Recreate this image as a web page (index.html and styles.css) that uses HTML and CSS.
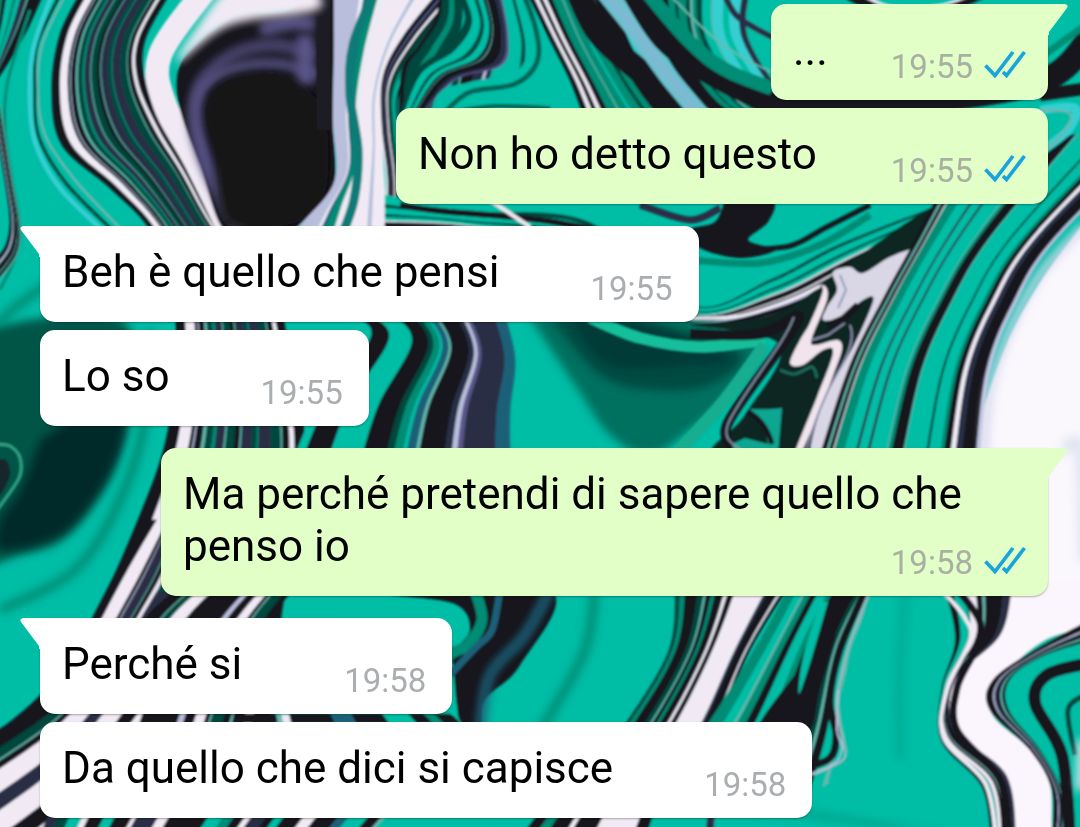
FILE: index.html
```html
<!DOCTYPE html>
<html lang="it">
<head>
<meta charset="utf-8">
<meta name="viewport" content="width=device-width, initial-scale=1">
<title>Chat</title>
<link rel="stylesheet" href="styles.css">
</head>
<body>
<svg class="wallpaper" viewBox="0 0 1080 827" preserveAspectRatio="xMidYMid slice" aria-hidden="true"></svg>
<svg class="defs" aria-hidden="true">
  <symbol id="ticks" viewBox="0 0 42 28">
    <path d="M1.500 15.500 11 25.500 29 2M19 22l3.500 3.500L40.500 2" fill="none" stroke="#17a5dc" stroke-width="3.700"/>
  </symbol>
  <symbol id="tail" viewBox="0 0 22 31">
    <path d="M0 0H18Q22 1 20 4L2 28V31H0Z"/>
  </symbol>
</svg>
<main class="chat">
  <section class="group">
    <article class="bubble sent">
      <svg class="tail"><use href="#tail"/></svg>
      <p class="text">...</p>
      <div class="meta"><time>19:55</time><svg class="ticks" role="img" aria-label="Letto"><use href="#ticks"/></svg></div>
    </article>
    <article class="bubble sent">
      <p class="text">Non ho detto questo&nbsp;</p>
      <div class="meta"><time>19:55</time><svg class="ticks" role="img" aria-label="Letto"><use href="#ticks"/></svg></div>
    </article>
  </section>
  <section class="group">
    <article class="bubble received">
      <svg class="tail"><use href="#tail"/></svg>
      <p class="text">Beh è quello che pensi</p>
      <div class="meta"><time>19:55</time></div>
    </article>
    <article class="bubble received">
      <p class="text">Lo so</p>
      <div class="meta"><time>19:55</time></div>
    </article>
  </section>
  <section class="group">
    <article class="bubble sent long">
      <svg class="tail"><use href="#tail"/></svg>
      <p class="text">Ma perché pretendi di sapere quello che penso io</p>
      <div class="meta"><time>19:58</time><svg class="ticks" role="img" aria-label="Letto"><use href="#ticks"/></svg></div>
    </article>
  </section>
  <section class="group">
    <article class="bubble received">
      <svg class="tail"><use href="#tail"/></svg>
      <p class="text">Perché si&nbsp;</p>
      <div class="meta"><time>19:58</time></div>
    </article>
    <article class="bubble received">
      <p class="text">Da quello che dici si capisce</p>
      <div class="meta"><time>19:58</time></div>
    </article>
  </section>
</main>
<script>
// Marbled wallpaper: each band is a set of stripes blended between two guide curves.
const paper = document.querySelector('.wallpaper');
const ns = 'http://www.w3.org/2000/svg';
const ink = {
  k: '#15141b', w: '#f1eaf5', t: '#00bda6', g: '#008c74', d: '#00463c',
  n: '#292d45', l: '#b9bedc', c: '#35cfd2', p: '#5a5588', s: '#68b8ae', b: '#1a6078'
};

paper.innerHTML = `<defs>
  <filter id="soft" filterUnits="userSpaceOnUse" x="-50" y="-50" width="1180" height="927"><feGaussianBlur stdDeviation="0.9"/></filter>
  <filter id="haze" filterUnits="userSpaceOnUse" x="-50" y="-50" width="1180" height="927"><feGaussianBlur stdDeviation="4"/></filter>
</defs><rect width="1080" height="827" fill="#00bda6"/>`;

const layer = document.createElementNS(ns, 'g');
layer.setAttribute('filter', 'url(#soft)');
paper.append(layer);

function curve(pts) {
  let d = '';
  for (let i = 0; i < pts.length - 1; i++) {
    const a = pts[i - 1] || pts[i], b = pts[i], c = pts[i + 1], e = pts[i + 2] || c;
    d += `C${b[0] + (c[0] - a[0]) / 6} ${b[1] + (c[1] - a[1]) / 6} ` +
         `${c[0] - (e[0] - b[0]) / 6} ${c[1] - (e[1] - b[1]) / 6} ${c[0]} ${c[1]}`;
  }
  return d;
}

const pairs = text => text.trim().split(/\s+/).map(p => p.split(',').map(Number));

function add(d, fill, stroke, width, hazy) {
  const p = document.createElementNS(ns, 'path');
  p.setAttribute('d', d);
  p.setAttribute('fill', fill);
  p.setAttribute('stroke-linejoin', 'round');
  if (stroke) {
    p.setAttribute('stroke', stroke);
    p.setAttribute('stroke-width', width);
  }
  if (hazy) p.setAttribute('filter', 'url(#haze)');
  layer.append(p);
}

function band(from, to, stripes) {
  const A = pairs(from), B = pairs(to);
  const mix = t => A.map((a, i) => [a[0] + (B[i][0] - a[0]) * t, a[1] + (B[i][1] - a[1]) * t]);
  const list = [...stripes.matchAll(/([a-z])([\d]+)/g)].map(m => [m[1], +m[2]]);
  const total = list.reduce((s, x) => s + x[1], 0);
  let at = 0;
  for (const [name, size] of list) {
    const p = mix(at / total), q = mix((at + size) / total).reverse();
    add(`M${p[0]}${curve(p)}L${q[0]}${curve(q)}Z`, ink[name], ink[name], 0.5);
    at += size;
  }
}

function line(points, color, width, hazy) {
  const p = pairs(points);
  add(`M${p[0]}${curve(p)}`, 'none', ink[color] || color, width, hazy);
}

function blob(points, color, hazy) {
  const p = pairs(points);
  add(`M${p[0]}${curve(p)}Z`, ink[color] || color, null, 0, hazy);
}

// Left edge
band('-10,-10 -10,20 -10,45 -10,75', '45,-10 28,28 10,60 -10,90', 't10 g6 k5 t8 g5 t5 n8 s2 k16');
line('65,-5 42,45 38,90 45,135 75,180 120,228', 's', 3);
line('60,-5 37,45 35,90 38,135 65,182 110,228', 'd', 3);
line('52,-5 33,50 30,100 36,145 60,188 100,228', 'c', 5);
line('30,10 8,80 5,130 12,180 20,240 0,290', 'g', 3);
band('-5,120 5,180 10,220 6,245 -5,260', '0,105 12,180 20,225 17,255 -5,285', 'k4 l2 k5 s1 k3 s1');
line('-5,325 25,300 60,280 100,290', 'g', 9, true);
blob('-30,335 30,320 100,315 133,335 132,400 125,440 104,490 65,538 20,555 -30,560 -30,450 -30,335', '#005447', true);
blob('40,440 100,400 126,380 122,440 100,490 60,535 0,550 0,520 20,490 40,440', '#062b29', true);
line('-5,444 10,446 20,458 19,478 -3,510', '#2fa184', 3);
blob('-5,460 6,460 10,475 0,495 -8,490 -5,460', '#15252b');
line('150,330 145,420 120,500 75,570 0,610', 'g', 9, true);

// Long striped ribbon running down the left side
band('82,-10 60,35 52,90 62,145 110,188 150,230 172,290 176,360 166,440 140,515 97,610 45,690 -20,745',
     '172,-10 145,40 145,80 165,125 190,170 222,230 275,295 292,370 305,440 300,520 282,610 270,720 250,850',
     'k7 w7 k2 l1 k4 s2 d4 g2 n5 s1 d5 k3 s1 n6 d3 g1 n7 d6 s1 k4 w3 k6');
line('205,-10 160,55 165,105 195,160 232,235', 'w', 24);
band('150,592 100,650 35,827', '290,592 250,660 190,850', 'n12 k8 s1 d4 w8 k18 l3 k5 w5 k2 s1 d6 k3');
band('150,520 115,575 75,650 35,705 -20,740', '185,520 165,575 125,650 110,730 30,850', 'k8 w12 k3 l1 n8 s1 k4 w3');
band('-20,750 35,715 60,700', '-20,870 70,800 140,710', 'k5 d6 s1 k4 w12 n9 w13 k10');

// Dark drop
blob('205,36 240,15 290,10 318,-20 338,-20 334,60 333,120 334,185 310,215 280,235 228,235 200,165 179,105 180,65 205,36', 'k');
line('240,230 215,180 195,125 200,85 232,55 275,45 315,55', '#47436c', 13, true);
line('230,215 206,165 197,120 203,88 235,68 280,64 320,75', 'p', 9, true);
line('260,30 290,23 315,24', 'p', 14, true);
line('305,35 305,85', 'p', 16, true);
blob('215,150 205,110 225,82 275,75 310,95 325,135 318,205 270,225 225,220 215,150', '#131618', true);
line('324,-10 323,65 324,130', '#1c1b24', 14);
blob('310,-20 235,-15 195,30 178,62 230,25 316,10 316,-10', 'w', true);

// Pale columns beside the drop
band('334,-10 334,60 333,120 335,180 305,220 285,240', '435,-10 400,40 383,90 382,140 385,190 386,240', 'l18 w3 b3 g7 w4 w20 l3 w10');
line('375,-10 353,45 350,95 358,150 354,200 340,240', '#087b78', 9);
band('435,-10 400,35 381,75 380,125 386,180 384,240', '480,-10 430,45 400,90 399,130 405,180 405,240', 'w4 k5 p2 k4 w3 k3 d4 g4 t4 k3');

// Folds at the top centre
band('440,-10 436,18 418,46 402,70 399,120', '530,-10 545,40 550,65 548,100 548,120', 'k3 d7 g5 d8 t10 d4 s1 k7 n6 l2 n3 t18 d3 t18');
band('455,-10 465,20 445,48 415,72 400,115', '500,-10 508,35 502,65 455,80 420,118', 'd8 t9 d4 t6 k3 s1 k9 n5 p2');
blob('550,120 548,70 530,55 515,72 470,82 440,92 428,120', 't');
line('522,-10 536,30 537,62 515,84 470,92 445,112', '#046355', 5);
line('450,112 495,106 550,108', '#046355', 4);
band('525,-10 550,40 570,80 585,120', '785,-10 780,40 830,110 890,130', 'k4 w3 k3 w3 k4 g7 s1 g6 t2 g7 d3 g5 k16 c3 s8 l8 c5 k14 g5 d2 g6 d3 s2 g3 d4 t7 s1 c8 t5 c8 n5 t25');
line('577,-10 600,35 650,80 690,120', 'k', 24);
line('603,-10 635,30 668,76 705,120', '#65c4ce', 18);
line('603,-10 635,30 668,76 705,120', '#96afd6', 6, true);
line('632,-10 665,40 715,76 790,112', 'k', 23);
line('645,-10 690,42 730,72 800,98', 'g', 14);
line('665,-10 705,30 740,56 780,76', 's', 2);
line('722,-10 735,14 755,28 782,42', 'n', 6);
band('830,-10 880,12 950,10 1000,-10', '860,-10 890,5 940,4 980,-10', 'k6 w2');
line('770,104 900,103 1040,82 1090,38', 'k', 24);
line('1030,65 1090,22', 'g', 7);

// Ribbons between the upper bubbles
band('385,195 450,205 580,205 690,300 770,270 840,234 970,190', '385,245 490,245 620,290 690,326 780,316 860,278 970,210', 't12 d4 t8 d3 t5 w2 k7 w2 k2 l6 k7 w2 k2');
blob('725,200 772,200 768,222 748,240 775,250 740,258 700,248 690,230 715,222 725,200', 'k');
line('690,260 760,263 820,245 870,215', 'g', 7);
line('740,250 790,246 825,228 870,205', 'k', 5);
line('400,205 440,211 540,220 620,235', 'k', 6);
line('490,200 530,227', 'w', 4);
line('640,205 690,220 720,208', 'n', 7);

// Centre folds
band('345,315 365,335 320,400 295,455', '505,315 515,360 510,410 510,455', 't5 k14 t18 k13 d4 g5 t2 b5 s2 k14 n4 l3 p3 n18 b8');
blob('530,318 690,318 760,350 728,395 690,430 650,455 610,435 575,385 530,318', '#00705f', true);
blob('550,318 650,325 740,352 710,385 650,390 600,375 550,318', '#004c43', true);
blob('570,318 650,325 730,358 690,365 610,365 570,318', '#063b38', true);
line('590,318 640,338 700,347 765,340', '#12bf9c', 11);
line('765,345 725,400 675,455', '#12ad90', 13);

// Jagged pale fold
blob('690,325 780,312 850,262 940,205 910,275 860,360 830,455 715,455 745,415 780,345 690,325', '#0b2524');
line('690,334 760,334 798,316 782,345 727,425 740,455', 'k', 10);
line('690,318 740,316 790,300 820,286', 'w', 3);
blob('917,247 890,257 863,273 850,267 833,272 837,290 827,307 823,320 840,317 863,300 873,297 870,310 853,347 823,403 810,455 824,455 847,383 870,333 890,293 903,270 917,247', '#d9d6e6');
blob('815,287 823,290 810,323 800,340 790,363 803,365 823,350 833,353 817,397 794,455 800,455 818,415 834,373 842,349 837,340 815,345 812,338 827,300 825,286 815,287', '#f1e4ed');
add('M845 323 828 335 812 340M850 325Q856 340 842 365 820 400 805 455', 'none', '#8f8fae', 2);
add('M858 305 843 319 827 326', 'none', '#15141b', 7);
add('M840 275 846 290 838 308', 'none', '#8f9fb6', 2);
line('780,370 795,374 812,367 817,378', '#1b6a58', 3);
add('M750 409Q770 410 782 408L778 455H735L732 444 745 438 768 444 764 424Z', '#08a691');
add('M748 412Q765 420 772 444', 'none', '#15141b', 5);
line('794,317 781,342 728,424 740,450', '#7f8fa2', 2);

// Wide diagonal ribbons on the right
blob('1090,215 1038,285 1000,360 975,455 965,620 1090,630 1090,215', '#faf7fd');
band('955,160 915,240 885,295 850,365 820,455', '1190,110 1060,235 1015,305 990,370 980,455', 'k4 s2 k3 w1 g8 t9 n2 t7 n2 t13 s1 g3 k9 s1 t17 d2 t9 g3 k5 w4 n5 k11 l3');
line('1085,225 1040,275 1008,335 990,390 984,455', '#d7d9ed', 8, true);
line('1063,450 1080,450 1085,560', '#dfe5f0', 12, true);
line('1040,110 1075,108 1068,130 1040,152', 'c', 9);
line('1040,110 1067,112 1070,122 1055,142 1040,148', 's', 3);
line('1040,95 1090,88', 'k', 12);

// Lower centre
line('300,630 430,650 460,710', 't', 50);
blob('390,595 455,604 470,630 450,655 453,665 460,720 480,732 485,700 520,665 550,590 390,595', 'k');
line('475,590 482,620 468,645 445,662 430,730', 'g', 11);
line('500,590 492,630 475,648 445,680', 'b', 7);
line('550,590 525,635 490,675 480,730', 'b', 10, true);
line('595,590 585,650 550,715 515,770', 'g', 9, true);
band('670,585 665,650 620,725 570,790', '790,585 750,650 715,730 665,810', 't4 d4 g4 k10 d5 s2 k4 g3 k7 w3 k5 w24 n3 k8 w2 k3');
band('790,585 760,640 700,735 650,790', '880,585 850,650 840,730 825,795', 'g10 t7 s2 g6 k6 t9 g5 k23 d4 s2 k5 t6 s2');
blob('800,668 837,622 820,690 806,735 755,735 800,668', 'k');
blob('828,602 812,657 799,694 803,658 820,602', 't');
blob('872,590 852,650 840,704 846,745 850,765 815,800 900,800 900,590', 't');
line('868,595 848,650 837,704 843,740 843,760 812,774', '#92b9bd', 3);
line('863,595 840,650 830,700 836,735 830,758 805,768', 'k', 7);
line('838,690 837,730 842,748 834,764 805,777', 'l', 2);
line('905,590 900,670 900,760', '#02ae98', 10, true);
line('690,800 850,820 950,840', '#02a48e', 7, true);

// Lower right
blob('1005,585 1090,585 1090,632 1040,650 1005,685 1000,700 1050,755 1060,840 1010,840 980,780 945,730 955,670 1005,585', '#fbf5fd');
band('925,585 943,640 938,690 938,745 975,790 984,840', '1012,585 1000,635 955,680 955,730 1006,775 1016,840', 't12 k5 t7 g2 w6 k4 s2 k12 n5');
line('942,590 965,618 970,640 947,690 944,738 985,783 996,835', 'w', 4);
line('958,590 980,622 975,650 957,688 957,730 1000,780 1005,835', 'k', 7);
blob('1090,627 1045,640 1003,675 990,700 996,720 1030,750 1050,785 1055,840 1090,840 1090,627', 't');
band('1090,620 1035,650 993,680 990,710 1030,750 1052,790 1052,840', '1090,650 1045,660 1017,680 1017,710 1045,750 1070,800 1070,840', 'k7 w1 p2 k4 s2 k3 t8');
line('1090,663 1047,675 1035,703 1062,755 1070,840', 'k', 12);
line('1085,695 1068,710 1075,755', 'd', 5);
line('1082,740 1080,790', 'w', 8, true);

// Narrow strips around the last bubbles
band('240,714 240,723', '450,714 460,723', 'k14 s2 w3 k16 b8 k12 t10 k6 g4 k6');
band('50,812 40,835', '390,812 370,835', 'n5 d5 t6 w3 k7 t5 k8 w2 n10 w5 k18 t7 g5 k5 w3 n7 k4 t4 k9 w6 k10 b5 t9 k6 s2');
band('510,812 490,835', '740,812 740,835', 't12 k5 g4 k7 w2 k9 w15 k5 t22 n3 t10');
</script>
</body>
</html>
```
FILE: styles.css
```css
* { box-sizing: border-box; }

body {
  margin: 0;
  min-height: 100vh;
  background: #00bda6;
  color: #000;
  font-family: Roboto, "Noto Sans", sans-serif;
  overflow: hidden;
}

.wallpaper {
  position: fixed;
  inset: 0;
  width: 100%;
  height: 100%;
  z-index: -1;
}

.defs {
  position: absolute;
  width: 0;
  height: 0;
}

.chat {
  display: flex;
  flex-direction: column;
  gap: 22px;
  padding: 4px 32px 8px 40px;
}

.group {
  display: flex;
  flex-direction: column;
  gap: 8px;
}

.bubble {
  position: relative;
  display: flex;
  align-items: flex-end;
  max-width: 88%;
  padding: 20px 22px 14px;
  border-radius: 15px;
  box-shadow: 0 1px 2px rgba(0, 0, 0, 0.3);
}

.sent {
  align-self: flex-end;
  gap: 63px;
  background: #e1ffc7;
  fill: #e1ffc7;
}

.received {
  align-self: flex-start;
  gap: 91px;
  padding-right: 26px;
  background: #fff;
  fill: #fff;
}

.sent:first-child { border-top-right-radius: 0; }
.received:first-child { border-top-left-radius: 0; }

.text {
  margin: 0 0 10px;
  font-size: 44px;
  line-height: 52px;
}

.meta {
  display: flex;
  align-items: center;
  gap: 11px;
  flex: none;
  color: #aaaeb0;
  font-size: 33px;
  line-height: 39px;
}

.sent .meta { color: #a9b0a3; }

.long { display: flow-root; }

.long .text { display: inline; }

.long .meta {
  float: right;
  margin-top: 23px;
}

.ticks {
  width: 42px;
  height: 28px;
  margin-bottom: 6px;
}

.tail {
  position: absolute;
  top: 0;
  width: 22px;
  height: 31px;
}

.sent .tail { left: calc(100% - 1px); }

.received .tail {
  right: calc(100% - 1px);
  transform: scaleX(-1);
}
```
